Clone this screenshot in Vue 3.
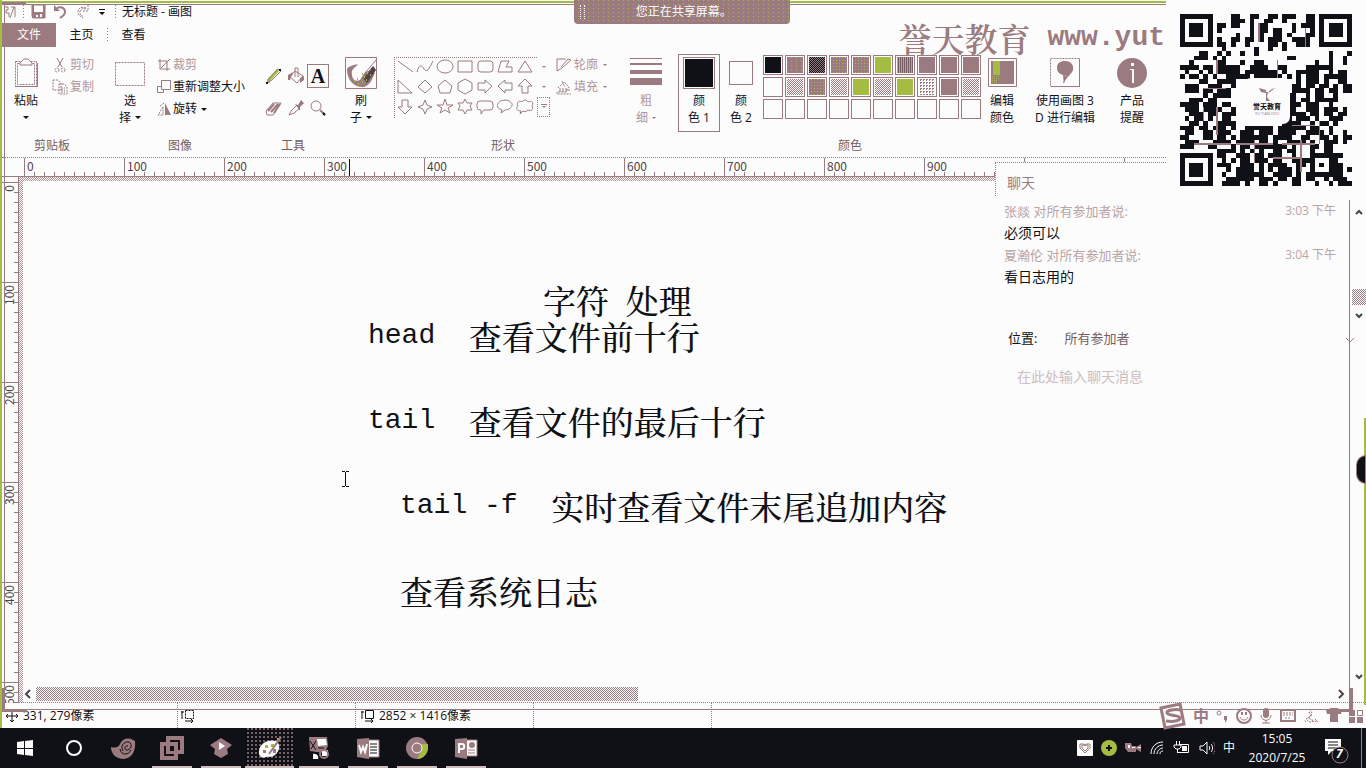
<script setup>
import { ref } from 'vue'

const message = ref('')

const horizontalMarks = Array.from({ length: 12 }, (_, i) => i * 100)
const verticalMarks = Array.from({ length: 6 }, (_, i) => i * 100)

const shapes = [
  'M2 3 L17 14',
  'M1 14 C3 6 6 7 8 11 C11 16 14 9 17 3',
  'M9 2 A8 6.5 0 1 0 9.1 2 Z',
  'M2 3 H16 V14 H2 Z',
  'M5 3 H14 Q17 3 17 6 V11 Q17 14 14 14 H5 Q2 14 2 11 V6 Q2 3 5 3 Z',
  'M5 3 H13 L10 9 H16 V14 H2 Z',
  'M9 3 L16 14 H2 Z',
  'M2 2 V15 H16 Z',
  'M9 2 L16 9 L9 15 L2 9 Z',
  'M9 2 L16 8 L14 15 H4 L2 8 Z',
  'M9 1 L16 5 V12 L9 16 L2 12 V5 Z',
  'M2 5 H9 V2 L16 8 L9 15 V12 H2 Z',
  'M16 5 H9 V2 L2 8 L9 15 V12 H16 Z',
  'M6 15 V8 H2 L9 1 L16 8 H12 V15 Z',
  'M6 2 H12 V9 H16 L9 16 L2 9 H6 Z',
  'M9 2 L11 7 L16 9 L11 11 L9 16 L7 11 L2 9 L7 7 Z',
  'M9 1 L11 7 H17 L12 10 L14 15 L9 12 L4 15 L6 10 L1 7 H7 Z',
  'M9 1 L11 5 H16 L14 8 L16 12 H11 L9 16 L7 12 H2 L4 8 L2 5 H7 Z',
  'M4 3 H14 Q17 3 17 6 V9 Q17 12 14 12 H8 L5 16 V12 H4 Q1 12 1 9 V6 Q1 3 4 3 Z',
  'M6 12 C-1 10 0 3 9 2 C19 3 18 11 9 12 L5 15 Z',
  'M5 13 C0 13 0 9 2 8 C0 4 4 2 6 4 C8 1 11 2 12 4 C16 2 18 5 16 8 C18 11 15 14 12 12 C10 14 8 14 7 13 L4 16 Z'
]

const swatches = [
  'black', 'fleck', 'dense', 'speckle', 'speckle', 'green', 'olive', 'mauve', 'mauve', 'mauve',
  'blank', 'mesh', 'speckle', 'mesh', 'green', 'mesh', 'green', 'pale', 'mauve', 'mesh',
  'blank', 'blank', 'blank', 'blank', 'blank', 'blank', 'blank', 'blank', 'blank', 'blank'
]

const qrRows = [
  '...........##..##..##.###..##........',
  '...........###.#..##..#....##.#......',
  '........##.##..#.##.....#.###.#......',
  '........#......#.##.##..#...#........',
  '............#..#.#..##.#...##........',
  '........#..##.##.#.###..####.........',
  '........##.#..#....##.#..###.........',
  '.........#......#..#..#..............',
  '....##..#.#..#..#...............#...#',
  '...###.#.#.............##.......#..#.',
  '..#.....##...#..##...........#..#..#.',
  '####.##.#####..####..##....######....',
  '.#..#.#.#####.#######.#..#####..#.##.',
  '#.##.#.#..#####.######.#.#.###.#####.',
  '....##..####.............#.###.#..##.',
  '.###..###..#............##.##.##.#.##',
  '.###.##.###.............####.##.##.##',
  '.....#.####............##..#.##..#...',
  '..###.##.............####.##.#####...',
  '####.###.##...........####.###..#....',
  '.###.####..#..........###..###.###.#.',
  '..###.##.###...........####.##.##.##.',
  '.#.##.#..##............#.###.#..###..',
  '..##.#..####..........####..#.##.#...',
  '###.##.###.#..######.######.##..#....',
  '.##..##.###..###.###.####..####.#..#.',
  '##...##.##.#.######.####..##..##.#.##',
  '.###...####.####.##.#..####.#..###.#.',
  '###...##...#.##.#######.#...##.##....',
  '........####.#.#.#..##.##...#..##....',
  '........##..###.##.###..#.....#.###..',
  '.........#.#.##.###.##..####.#..##...',
  '........###..###.#.####..##.####.##..',
  '..........#.####.#.#.###.#..###..##.#',
  '.........#..######..####.#.###.#.##..',
  '..........######.###.##.##.##..#.###.',
  '.........####.#..##.#...##...#..#.###'
]
const qrPath = qrRows
  .map((row, y) => [...row].map((cell, x) => (cell === '#' ? `M${x} ${y}h1v1h-1z` : '')).join(''))
  .join('')

const notes = [
  { key: 'title', latin: '', text: '字符', gap: ' ', rest: '处理' },
  { key: 'head', latin: 'head  ', text: '查看文件前十行' },
  { key: 'tail', latin: 'tail  ', text: '查看文件的最后十行' },
  { key: 'follow', latin: 'tail -f  ', text: '实时查看文件末尾追加内容' },
  { key: 'logs', latin: '', text: '查看系统日志' }
]

const chats = [
  { who: '张燚 对所有参加者说:', time: '3:03 下午', text: '必须可以' },
  { who: '夏瀚伦 对所有参加者说:', time: '3:04 下午', text: '看日志用的' }
]
</script>

<template>
  <div class="desktop">
    <main class="paint">
      <header class="titlebar">
        <svg class="logo" width="12" height="16" viewBox="0 0 12 16"><path d="M1 3h3v3H2v3h3v4M6 14l4-11M7 3h4v10" class="line" /></svg>
        <i class="vdots"></i>
        <button class="quick" aria-label="保存"><svg width="15" height="15" viewBox="0 0 15 15"><path d="M1 1h13v13H2L1 12z" class="line" /><path d="M1 8h13v6H1zM1 1h2v9H1zM12 1h2v9h-2z" class="fill" /><path d="M5 11h2v2H5zM9 10h2v3H9z" fill="#fcfcfc" /></svg></button>
        <button class="quick" aria-label="撤消"><svg width="15" height="15" viewBox="0 0 15 15"><path d="M1 1v6h6z" class="fill" /><path d="M4 4C8 2 12 4 12 8c0 3-2 4-5 6" class="line thick" /></svg></button>
        <button class="quick" aria-label="重做"><svg width="15" height="15" viewBox="0 0 15 15"><path d="M13 1v6H8M11 4C7 2 3 4 3 8c0 3 2 4 5 6" class="line dash" /><path d="M11 5C7 4 5 5 5 8c0 3 1 3 4 5" class="line dash" /></svg></button>
        <button class="quick more" aria-label="自定义快速访问工具栏"><svg width="8" height="8" viewBox="0 0 8 8"><path d="M1 1h6v1H1zM1 4h6L4 7z" fill="#101116" /></svg></button>
        <i class="vdots"></i>
        <h1>无标题 - 画图</h1>
      </header>

      <nav class="tabs">
        <button class="file">文件</button>
        <button class="tab">主页</button>
        <i class="vdots"></i>
        <button class="tab">查看</button>
      </nav>

      <section class="ribbon">
        <div class="group clipboard">
          <div class="body">
            <button class="big">
              <svg width="26" height="32" viewBox="0 0 26 32"><path d="M2.500 4.500h21v25h-21z" class="line dash" /><path d="M4.500 6.500h17v21h-17z" class="line dash" /><path d="M2 29.500h22M24.500 6v24" class="line" /><path d="M7 6l4-4h4l4 4v2H7z" fill="#fcfcfc" stroke="#9b7b7f" /></svg>
              <span>粘贴</span><b class="arrow"></b>
            </button>
            <div class="stack">
              <button class="small dim"><svg width="16" height="16" viewBox="0 0 16 16"><path d="M5 1l5 9M11 1L6 10" class="line" /><circle cx="5" cy="13" r="2" class="line dash" /><circle cx="11" cy="13" r="2" class="line dash" /></svg>剪切</button>
              <button class="small dim"><svg width="16" height="16" viewBox="0 0 16 16"><path d="M1 1h5l3 3v7H1zM7 5h5l3 3v7H7zM9 9h4M9 11h4M9 13h4" class="line dash" /></svg>复制</button>
            </div>
          </div>
          <span class="caption">剪贴板</span>
        </div>

        <div class="group image">
          <div class="body">
            <button class="big">
              <svg width="32" height="32" viewBox="0 0 32 32"><path d="M1.500 5.500h29v23h-29z" fill="none" stroke="#9b7b7f" stroke-dasharray="2 1" /></svg>
              <span>选</span><span>择<b class="arrow"></b></span>
            </button>
            <div class="stack">
              <button class="small dim"><svg width="14" height="14" viewBox="0 0 14 14"><path d="M3 1v10h10M1 3h9v10M4 10l9-9" class="line" /></svg>裁剪</button>
              <button class="small"><svg width="14" height="14" viewBox="0 0 14 14"><path d="M4.500.5h9v9h-9zM4 6.500H.5v6h6V10" class="line" /></svg>重新调整大小</button>
              <button class="small"><svg width="14" height="14" viewBox="0 0 14 14"><path d="M8 1l6 12H8z" class="fill" /><path d="M6 5L1 13h5zM3 4l4-3" class="line dash" /></svg>旋转<b class="arrow"></b></button>
            </div>
          </div>
          <span class="caption">图像</span>
        </div>

        <div class="group tools">
          <div class="body toolgrid">
            <button aria-label="铅笔"><svg width="18" height="18" viewBox="0 0 18 18"><path d="M3 14L13 3" stroke="#a4bc42" stroke-width="3" /><path d="M2 16l2-5L13 2l3 2-9 9zM2 16l3-1" class="line" /><path d="M1 15h2v2H1zM14 2h2v2h-2z" fill="#101116" /></svg></button>
            <button aria-label="用颜色填充"><svg width="18" height="18" viewBox="0 0 18 18"><path d="M8 4l8 5-6 7-7-6zM8 10V1h3v9" class="line" /><path d="M1 8l5-3-3 8H1zM13 11l4-2v4l-4 3z" class="fill" /></svg></button>
            <button aria-label="文本" class="picked">A</button>
            <button aria-label="橡皮擦"><svg width="18" height="18" viewBox="0 0 18 18"><path d="M1 12L8 4h8l-8 12H2z" class="line" /><path d="M3 12l6-7M6 13l7-8M9 14l6-9" class="line thick" /></svg></button>
            <button aria-label="颜色选取器"><svg width="18" height="18" viewBox="0 0 18 18"><path d="M2 16l2-4 6-6 3 3-6 5z" class="line" /><path d="M8 5l3 1 3-5 3 3-4 4v4z" class="fill" /></svg></button>
            <button aria-label="放大镜"><svg width="18" height="18" viewBox="0 0 18 18"><circle cx="7" cy="7" r="5" class="line" /><path d="M11 11l5 5" class="line thick" /><path d="M14 14l2 2" stroke="#101116" stroke-width="2" /></svg></button>
          </div>
          <span class="caption">工具</span>
        </div>

        <div class="group brush">
          <div class="body">
            <button class="big">
              <svg width="32" height="32" viewBox="0 0 32 32"><path d="M.5.5h31v31H.5z" class="line" /><path d="M2 12c0 12 8 19 17 18 8-3 8-9 11-14l-6-2c-5 0-6 5-9 9-6 3-9-3-8-9 1-3 4-4 6-7-6 1-10 3-11 5z" class="fill" /><path d="M18 21l10-12 3 4-9 13z" fill="#4e4148" /><path d="M20 16L31 3M15 26l11-14" class="line" /><path d="M9 24h1M13 27h1M17 25h1M21 23h1M17 17h1M22 16h1M25 18h1M12 22h1M19 20h1" stroke="#a4bc42" stroke-width="2" /></svg>
              <span>刷</span><span>子<b class="arrow"></b></span>
            </button>
          </div>
        </div>

        <div class="group shapes">
          <div class="body">
            <div class="gallery">
              <button v-for="(shape, i) in shapes" :key="i" :aria-label="`形状 ${i + 1}`"><svg width="18" height="17" viewBox="0 0 18 17"><path :d="shape" class="line" /></svg></button>
            </div>
            <div class="scroller">
              <button aria-label="向上"><b class="tiny"></b></button>
              <button aria-label="向下"><b class="tiny"></b></button>
              <button aria-label="更多"><b class="tiny bar"></b></button>
            </div>
            <div class="stack">
              <button class="small dim"><svg width="16" height="16" viewBox="0 0 16 16"><path d="M10 2H1v12l5-3 9-8-3-1-7 8" class="line" /></svg>轮廓<b class="tiny"></b></button>
              <button class="small dim"><svg width="16" height="16" viewBox="0 0 16 16"><path d="M2 9l6-6 5 5-3 5H1v2h14M6 2l3 6M3 12h9M3 10h9M12 11h3" class="line dash" /></svg>填充<b class="tiny"></b></button>
            </div>
          </div>
          <span class="caption">形状</span>
        </div>

        <div class="group size">
          <div class="body">
            <button class="big dim">
              <svg width="32" height="32" viewBox="0 0 32 32"><path d="M0 1h32v1H0zM0 6h32v2H0zM0 13h32v4H0zM0 21h32v7H0z" class="fill" /></svg>
              <span>粗</span><span>细<b class="tiny"></b></span>
            </button>
          </div>
        </div>

        <div class="group colors">
          <div class="body">
            <button class="big current"><i class="ink"></i><span>颜</span><span>色 1</span></button>
            <button class="big second"><i class="paper"></i><span>颜</span><span>色 2</span></button>
            <div class="palette">
              <button v-for="(swatch, i) in swatches" :key="i" :aria-label="`颜色 ${i + 1}`"><i :class="swatch"></i></button>
            </div>
            <button class="big edit">
              <svg width="30" height="32" viewBox="0 0 30 32"><path d="M1.500 1.500h28v28h-28z" class="line" /><path d="M4 4h23v23H4z" class="fill" /><path d="M6 4h7v14H6z" fill="#a4bc42" /><path d="M5 19.500h8M5 21.500h8M5 23.500h6M5 25.500h5" stroke="#a4bc42" stroke-dasharray="1 1" /></svg>
              <span>编辑</span><span>颜色</span>
            </button>
          </div>
          <span class="caption">颜色</span>
        </div>

        <div class="group three">
          <div class="body">
            <button class="big">
              <svg width="30" height="32" viewBox="0 0 30 32"><path d="M.5 1.500h29v28H.5z" class="line dash" /><path d="M29.500 2v28M1 29.500h29" class="line" /><path d="M7 11c0-5 3-7 8-7 6 0 9 4 8 9-1 4-8 8-9 14l-1-9c-3-1-6-3-6-7z" class="fill" /><path d="M13 21h1M15 19h1M13 25h1" stroke="#a4bc42" stroke-width="2" /></svg>
              <span>使用画图 3</span><span>D 进行编辑</span>
            </button>
          </div>
        </div>

        <div class="group tips">
          <div class="body">
            <button class="big">
              <svg width="30" height="32" viewBox="0 0 30 32"><circle cx="15" cy="16" r="15" class="fill" /><path d="M14 6h3v3h-3zM13 12h4v14h-2V13h-2z" fill="#fcfcfc" /></svg>
              <span>产品</span><span>提醒</span>
            </button>
          </div>
        </div>
      </section>

      <section class="workspace">
        <div class="ruler-x">
          <span v-for="mark in horizontalMarks" :key="mark">{{ mark }}</span>
          <i class="cursor-x"></i>
        </div>
        <div class="middle">
          <div class="ruler-y"><span v-for="mark in verticalMarks" :key="mark">{{ mark }}</span></div>
          <div class="sheet">
            <p v-for="note in notes" :key="note.key" :class="note.key"><span v-if="note.latin" class="latin">{{ note.latin }}</span>{{ note.text }}<span v-if="note.gap" class="latin">{{ note.gap }}</span>{{ note.rest }}</p>
            <svg class="caret" width="9" height="18" viewBox="0 0 9 18"><path d="M1 1.500h3M5 1.500h3M4.500 2v14M1 16.500h3M5 16.500h3" stroke="#101116" /></svg>
            <div class="hscroll">
              <button aria-label="向左滚动"><svg width="8" height="10" viewBox="0 0 8 10"><path d="M6 1L2 5l4 4" class="chev" /></svg></button>
              <div class="track"><i></i></div>
              <button aria-label="向右滚动"><svg width="8" height="10" viewBox="0 0 8 10"><path d="M2 1l4 4-4 4" class="chev" /></svg></button>
            </div>
          </div>
        </div>
      </section>

      <footer class="status">
        <span class="cell"><svg width="16" height="14" viewBox="0 0 16 14"><path d="M8 1v12M2 7h12M6 3l2-2 2 2M6 11l2 2 2-2M4 5L2 7l2 2M12 5l2 2-2 2" class="ink-line" /></svg>331, 279像素</span>
        <span class="cell"><svg width="16" height="14" viewBox="0 0 16 14"><path d="M2 2v8M1 3h3M5 12h8M11 10l2 2-2 2" class="ink-line" /><path d="M5.500 1.500h8v8h-8z" class="ink-line" stroke-dasharray="2 1" /></svg></span>
        <span class="cell wide"><svg width="16" height="14" viewBox="0 0 16 14"><path d="M2 2v8M1 3h3M5 12h8M11 10l2 2-2 2M5.500 1.500h8v8h-8z" class="ink-line" /></svg>2852 × 1416像素</span>
        <span class="cell"></span>
      </footer>
    </main>

    <div class="frame"><i class="tl"></i><i class="bl"></i><i class="br"></i></div>
    <div class="share"><i></i><span>您正在共享屏幕。</span></div>
    <div class="watermark">誉天教育<span class="latin"> www.yut</span></div>

    <aside class="chat">
      <h2>聊天</h2>
      <div v-for="chat in chats" :key="chat.time" class="msg">
        <div class="meta"><span>{{ chat.who }}</span><time>{{ chat.time }}</time></div>
        <p>{{ chat.text }}</p>
      </div>
      <div class="to"><span>位置:</span><button>所有参加者</button></div>
      <input v-model="message" type="text" aria-label="聊天消息" placeholder="在此处输入聊天消息" />
    </aside>

    <div class="vscroll">
      <svg width="8" height="6" viewBox="0 0 8 6"><path d="M1 5l3-3 3 3" class="chev" /></svg>
      <i></i>
      <svg width="8" height="6" viewBox="0 0 8 6"><path d="M1 1l3 3 3-3" class="chev" /></svg>
      <svg class="last" width="8" height="6" viewBox="0 0 8 6"><path d="M1 1l3 3 3-3" class="chev" /></svg>
    </div>
    <svg class="drop" width="10" height="6" viewBox="0 0 10 6"><path d="M1 1l4 4 4-4" class="line" /></svg>
    <i class="edge"></i><i class="knob"></i>

    <div class="qr">
      <svg viewBox="0 0 37 37" shape-rendering="crispEdges">
        <path :d="qrPath" fill="#101116" />
        <path d="M0 0h7v7H0zM30 0h7v7h-7zM0 30h7v7H0z" fill="#101116" />
        <path d="M1 1h5v5H1zM31 1h5v5h-5zM1 31h5v5H1z" fill="#fcfcfc" />
        <path d="M2 2h3v3H2zM32 2h3v3h-3zM2 32h3v3H2z" fill="#101116" />
        <path d="M28 30h5v5h-5z" fill="#101116" />
        <path d="M29 31h3v3h-3z" fill="#fcfcfc" />
        <path d="M30 32h1v1h-1z" fill="#101116" />
        <path d="M5 16h5M12 28h8M22 28h7M8 20v6M16 27v5M24 24h5M21 10v4M8 10v3M26 27v7M5 20v3M3 28h8M27 3v4M17 2v4M30 23v5M20 31h6" stroke="#9b7b7f" stroke-width=".3" />
      </svg>
      <div class="badge">
        <svg width="18" height="16" viewBox="0 0 18 16"><path d="M1 2l7 2v3L3 6zM17 2l-5 4-3 1 5-4zM8 6h2l-1 5 3 4H8z" class="fill" /></svg>
        <b>誉天教育</b><small>YU TIAN EDU</small>
      </div>
    </div>

    <div class="ime">
      <svg width="30" height="28" viewBox="0 0 30 28"><path d="M3 6l19-4 4 20-19 4z" fill="#fcfcfc" stroke="#9b7b7f" stroke-width="3" /><path d="M23 8c-6-1-15 0-14 3s13 2 13 5-7 4-14 3" fill="none" stroke="#9b7b7f" stroke-width="3" /></svg>
      <span>中</span>
      <svg width="16" height="18" viewBox="0 0 16 18"><circle cx="5" cy="6" r="2" class="line" /><path d="M10 9h3v4l-2 3v-3h-1z" class="fill" /></svg>
      <svg width="18" height="18" viewBox="0 0 18 18"><circle cx="9" cy="9" r="7" class="line thick" /><path d="M7 5v3M11 5v3" class="line thick" /><path d="M5 10c1 4 7 4 8 0" class="line" /></svg>
      <svg width="16" height="18" viewBox="0 0 16 18"><rect x="5" y="1" width="6" height="10" rx="3" class="fill" /><path d="M3 8c0 7 10 7 10 0M8 13v3M4 16h8" class="line" /></svg>
      <svg width="18" height="18" viewBox="0 0 18 18"><path d="M2 3h14v11H2z" class="line thick" /><path d="M4 6h10M4 8h10M6 11h6" class="line dash" /></svg>
      <svg width="18" height="18" viewBox="0 0 18 18"><path d="M7 2l3 4-1 3-5 3 3 3 8-1M4 15l-2-2M13 12l3 3M7 5l2 4-3 2 6 3" class="line dash" /></svg>
      <svg width="18" height="18" viewBox="0 0 18 18"><path d="M1 3l5-2h6l5 2-1 4h-3v8H5V7H2z" class="fill" /></svg>
      <svg width="16" height="18" viewBox="0 0 16 18"><path d="M1 3h6v6H1zM1 10h6v6H1zM9 10h6v6H9z" class="fill" /><path d="M9.500 3.500h5v5h-5z" class="line" /></svg>
    </div>

    <footer class="taskbar">
      <button class="app" aria-label="开始"><svg width="18" height="18" viewBox="0 0 18 18"><path d="M1 3l7-1v7H1zM9 2l8-1v8H9zM1 10h7v6l-7-1zM9 10h8v7l-8-1z" fill="#fcfcfc" /></svg></button>
      <button class="app" aria-label="Cortana"><svg width="18" height="18" viewBox="0 0 18 18"><circle cx="9" cy="9" r="7" fill="none" stroke="#fcfcfc" stroke-width="2" /></svg></button>
      <button class="app" aria-label="录屏"><svg width="26" height="22" viewBox="0 0 26 22"><path d="M1 10c4 1 7 1 9-3C12 2 18 0 23 3l2 1c1 10-3 17-11 18C6 22 1 17 1 10z" class="fill" /><path d="M13 14c-3-5 1-10 6-9 4 2 2 9-3 8-2-1-1-5 2-4M10 12c1 7 9 6 11 1" fill="none" stroke="#101116" /></svg></button>
      <button class="app open" aria-label="虚拟机"><svg width="26" height="26" viewBox="0 0 26 26"><path d="M9 3h14v14H9zM3 9h14v14H3z" fill="none" stroke="#9b7b7f" stroke-width="4" /><path d="M11 12h4v4h-4z" fill="#101116" /></svg></button>
      <button class="app open" aria-label="播放器"><svg width="24" height="22" viewBox="0 0 24 22"><path d="M12 1l11 7-5 4 1 5-7 4-7-4 1-5-5-4z" class="fill" /><path d="M10 5l6 4-6 4z" fill="#fcfcfc" /></svg></button>
      <button class="app open active" aria-label="画图"><svg width="26" height="24" viewBox="0 0 26 24"><path d="M2 15C3 7 11 3 19 5c5 3 4 10-1 14-4 3-6 1-9 2-4 2-8-1-7-6z" fill="#fcfcfc" /><path d="M6 14h3v3H6zM16 17h3v-4h-3z" class="fill" /><path d="M8 9h3v3H8zM14 8h3v3h-3zM14 13h2M20 2h3v3h-3z" fill="#a4bc42" /><path d="M24 1L12 18" class="line thick" /></svg></button>
      <button class="app open" aria-label="远程工具"><svg width="24" height="24" viewBox="0 0 24 24"><path d="M2 1h18l1 9-4 7-14-2z" class="fill" /><path d="M10 3h9l1 6-9 1zM6 18c5-1 6 4 5 5H6zM15 14h6v6h-6z" fill="#fcfcfc" /><path d="M3 5l6 9M4 13l5-8M11 12h6" stroke="#101116" /><circle cx="17" cy="18" r="4" class="line thick" /></svg></button>
      <button class="app open" aria-label="Word"><svg width="24" height="22" viewBox="0 0 24 22"><path d="M12 3h11v17H12z" fill="#fcfcfc" stroke="#9b7b7f" /><path d="M14 7h7M14 10h7M14 13h7M14 16h7" stroke="#101116" /><path d="M1 2l12-1v21L1 20z" class="fill" /><path d="M3 8l2 7 2-5 2 5 2-8" fill="none" stroke="#fcfcfc" stroke-width="2" /></svg></button>
      <button class="app open" aria-label="Chrome"><svg width="24" height="24" viewBox="0 0 24 24"><circle cx="12" cy="12" r="11" class="fill" /><path d="M16 8h7c1 9-5 15-11 15l5-10z" fill="#a4bc42" /><circle cx="12" cy="12" r="5" fill="#9b7b7f" stroke="#fcfcfc" /></svg></button>
      <button class="app open" aria-label="PowerPoint"><svg width="24" height="22" viewBox="0 0 24 22"><path d="M12 3h11v16H12z" fill="#fcfcfc" stroke="#9b7b7f" /><circle cx="18" cy="8" r="3" class="fill" /><path d="M14 13h7M14 16h7" class="line" /><path d="M1 2l12-1v21L1 20z" class="fill" /><path d="M5 16V7h3c3 0 3 5 0 5H5" fill="none" stroke="#fcfcfc" stroke-width="2" /></svg></button>

      <div class="tray">
        <svg width="16" height="16" viewBox="0 0 16 16"><rect width="16" height="16" rx="1" fill="#fcfcfc" /><path d="M3 4h4l1 2 1-2h4v4l-5 5-5-5z" class="line" /><path d="M5 5h6v3l-3 3-3-3z" class="line" /></svg>
        <svg width="16" height="16" viewBox="0 0 16 16"><circle cx="8" cy="8" r="8" fill="#a4bc42" /><path d="M8 5v6M5 8h6" stroke="#101116" stroke-width="2" /></svg>
        <svg width="16" height="16" viewBox="0 0 16 16"><path d="M0 3h6l1 3h4v6H3L0 8zM11 7l5-3v8l-5-3z" class="fill" /><path d="M3 5h2v3H3zM7 7h3v1H7zM13 7h3v1h-3z" fill="#fcfcfc" /></svg>
        <svg width="16" height="16" viewBox="0 0 16 16"><path d="M2 14C2 7 7 2 14 2M5 14c0-5 4-9 9-9M8 14c0-3 3-6 6-6M11 14c0-2 1-3 3-3" class="white" /></svg>
        <svg width="18" height="16" viewBox="0 0 18 16"><path d="M5 12.500h10.500v-8H7M3.500 1v4M6.500 1v4M1 5h7v2L6 9H3L1 7zM4.500 9v4" class="white" /><path d="M9 6h5v5H9z" fill="#fcfcfc" /></svg>
        <svg width="16" height="16" viewBox="0 0 16 16"><path d="M1 6h3l4-4v12l-4-4H1zM10 6c1 1 1 3 0 4M12 4c2 2 2 6 0 8" class="white" /><path d="M14 2c3 3 3 9 0 12" class="line dash" /></svg>
        <span>中</span>
      </div>
      <div class="clock"><span>15:05</span><span>2020/7/25</span></div>
      <button class="notice" aria-label="通知"><svg width="26" height="28" viewBox="0 0 26 28"><path d="M1 2h16v12H8l-4 4v-4H1z" fill="#fcfcfc" /><path d="M4 5h10M4 8h10M4 11h8" stroke="#101116" /><circle cx="16" cy="18" r="8" fill="#101116" stroke="#9b7b7f" /></svg><em>7</em></button>
    </footer>
  </div>
</template>

<style>
body { margin: 0; background: #fcfcfc; }
</style>

<style scoped>
* { box-sizing: border-box; }
.desktop { position: relative; display: flex; flex-direction: column; min-height: 100vh; overflow: hidden; background: #fcfcfc; color: #101116; font: 12px/16px "Open Sans", "Noto Sans CJK SC", sans-serif; }
button { margin: 0; padding: 0; border: 0; background: none; color: inherit; font: inherit; line-height: inherit; }
h1, h2, p { margin: 0; font-size: inherit; font-weight: 400; }
svg { display: block; flex: none; }
.line { fill: none; stroke: #9b7b7f; }
.thick { stroke-width: 2; }
.dash { stroke-dasharray: 2 1; }
.fill { fill: #9b7b7f; }
.ink-line { fill: none; stroke: #101116; }
.white { fill: none; stroke: #fcfcfc; }
.chev { fill: none; stroke: #4e4148; stroke-width: 2; }
.dim { color: #b09699; }
.latin { font-family: "Liberation Mono", monospace; font-size: 28px; white-space: pre; }

.paint { flex: 1; display: flex; flex-direction: column; border-left: 2px solid #a4bc42; }
.titlebar { display: flex; align-items: center; height: 23px; padding-left: 2px; gap: 7px; }
.titlebar h1 { margin-left: -1px; }
.vdots { width: 1px; height: 14px; background: repeating-linear-gradient(#9b7b7f 0 1px, transparent 1px 3px); }
.quick.more { margin: 0 2px 0 1px; }
.tabs { display: flex; align-items: center; height: 24px; }
.file { width: 54px; height: 24px; background: #9b7b7f; color: #fcfcfc; }
.tab { width: 51px; height: 24px; }

.ribbon { display: flex; height: 111px; padding: 7px 0 3px; border-bottom: 1px dotted #9b7b7f; overflow: hidden; }
.group { flex: none; display: flex; flex-direction: column; justify-content: space-between; }
.body { display: flex; align-items: flex-start; }
.caption { color: #765e63; text-align: center; }
.big { display: flex; flex-direction: column; align-items: center; line-height: 17px; padding-top: 3px; white-space: nowrap; }
.big > svg { margin-bottom: 3px; }
.big span { display: flex; align-items: center; gap: 4px; }
.stack { display: flex; flex-direction: column; }
.small { display: flex; align-items: center; gap: 2px; height: 22px; white-space: nowrap; }
.arrow { border: 3px solid transparent; border-top-color: #101116; border-bottom: 0; }
.big > .arrow { margin-top: 7px; }
.small .arrow { margin-left: 2px; }
.tiny { border: 2px solid transparent; border-top-color: #9b7b7f; border-bottom: 0; }
.small .tiny { margin-left: 3px; }
.clipboard { width: 96px; margin-left: 2px; }
.clipboard .big { width: 44px; }
.clipboard .stack { margin-left: 4px; }
.image { width: 140px; margin-left: 10px; }
.image .big { width: 40px; }
.image .stack { margin-left: 7px; }
.tools { width: 60px; margin-left: 13px; }
.toolgrid { display: grid; grid-template-columns: 22px 22px 22px; padding-top: 10px; row-gap: 8px; }
.toolgrid button { display: flex; align-items: center; justify-content: center; height: 24px; }
.toolgrid .picked { border: 1px solid #9b7b7f; font: 700 20px/20px "Liberation Serif", serif; }
.brush { width: 34px; margin-left: 21px; }
.shapes { width: 218px; margin-left: 16px; }
.gallery { display: grid; grid-template-columns: repeat(7, 20px); width: 143px; margin-top: 3px; padding-left: 1px; border: 1px dotted #9b7b7f; border-width: 1px 0 0 1px; }
.gallery button { display: flex; align-items: flex-start; height: 20px; }
.scroller { display: flex; flex-direction: column; width: 13px; margin-top: 3px; }
.scroller button { display: flex; align-items: center; justify-content: center; height: 20px; }
.scroller button:last-child { border: 1px dotted #9b7b7f; }
.bar { position: relative; }
.bar::before { content: ""; position: absolute; left: -3px; top: -4px; width: 6px; height: 1px; background: #9b7b7f; }
.shapes .stack { margin-left: 6px; }
.size { width: 36px; margin-left: 16px; }
.colors { width: 344px; margin-left: 14px; }
.current { width: 42px; height: 78px; border: 1px solid #9b7b7f; padding-top: 2px; }
.ink { width: 32px; height: 32px; margin-bottom: 3px; border: 1px solid #9b7b7f; padding: 1px; background: #101116 content-box; }
.second { width: 42px; }
.paper { width: 24px; height: 24px; margin: 4px 0 7px; border: 1px solid #9b7b7f; }
.palette { display: grid; grid-template-columns: repeat(10, 20px); gap: 2px; margin: 1px 5px 0 1px; }
.palette button { height: 20px; padding: 1px; border: 1px solid #9b7b7f; }
.palette i { display: block; height: 16px; }
.black { background: #101116; }
.mauve { background: #9b7b7f; }
.green { background: #a4bc42; }
.dense { background: repeating-conic-gradient(#101116 0 25%, #9b7b7f 0 50%) 0 0 / 2px 2px; }
.mesh { background: repeating-conic-gradient(#9b7b7f 0 25%, #fcfcfc 0 50%) 0 0 / 2px 2px; }
.pale { background: conic-gradient(#9b7b7f 25%, #fcfcfc 0) 0 0 / 3px 3px; }
.speckle { background: linear-gradient(45deg, #9b7b7f 70%, #a4bc42 0) 0 0 / 3px 3px; }
.fleck { background: linear-gradient(45deg, #9b7b7f 80%, #a4bc42 0) 0 0 / 5px 4px; }
.olive { background: repeating-linear-gradient(90deg, #a4bc42 0 1px, #765e63 1px 2px); }
.edit { width: 32px; }
.three { width: 68px; margin-left: 9px; }
.tips { width: 36px; margin-left: 15px; }
.three .big, .tips .big, .brush .big, .size .big { width: 100%; }

.workspace { flex: 1; display: flex; flex-direction: column; }
.ruler-x { position: relative; display: flex; height: 19px; padding-left: 22px; overflow: hidden; border-bottom: 1px solid #9b7b7f; }
.ruler-x span { flex: none; width: 100px; height: 18px; padding-left: 2px; line-height: 15px; border-left: 1px solid #9b7b7f; font-family: "Noto Sans CJK SC", sans-serif; background: repeating-linear-gradient(90deg, #9b7b7f 0 1px, transparent 1px 10px) 9px 100% / 90px 4px no-repeat; color: #4e4148; }
.cursor-x { position: absolute; left: 347px; top: 1px; width: 1px; height: 17px; background: #101116; }
.middle { flex: 1; display: flex; }
.ruler-y { width: 17px; overflow: hidden; border-right: 1px solid #9b7b7f; contain: size; }
.ruler-y span { display: block; width: 16px; height: 100px; padding-top: 2px; border-top: 1px solid #9b7b7f; writing-mode: sideways-lr; text-align: right; font: 12px/13px "Noto Sans CJK SC", sans-serif; background: repeating-linear-gradient(#9b7b7f 0 1px, transparent 1px 10px) 100% 9px / 4px 90px no-repeat; color: #4e4148; }
.ruler-y span:first-child { margin-top: 5px; }
.sheet { position: relative; flex: 1; display: flex; flex-direction: column; min-width: 0; padding-top: 105px; border-bottom: 1px dotted #9b7b7f; background: linear-gradient(#fcfcfc, #fcfcfc) 4px 4px no-repeat, repeating-conic-gradient(#b09699 0 25%, #fcfcfc 0 50%) 0 0 / 2px 2px; }
.sheet p { display: flex; align-items: center; height: 36px; font: 500 33px/36px "Noto Serif CJK SC", "Noto Sans CJK SC", sans-serif; white-space: pre; }
.title { padding-left: 524px; }
.head { padding-left: 349px; }
.tail { padding-left: 349px; margin-top: 49px; }
.follow { padding-left: 381px; margin-top: 49px; }
.logs { padding-left: 381px; margin-top: 49px; }
.caret { position: absolute; left: 322px; top: 293px; }
.hscroll { display: flex; align-items: center; height: 16px; margin: auto 20px 0 4px; }
.hscroll button { padding: 0 1px; }
.track { flex: 1; margin: 0 3px; height: 14px; }
.track i { display: block; width: 46.4%; height: 14px; background: repeating-conic-gradient(#9b7b7f 0 25%, #fcfcfc 0 50%) 0 0 / 2px 2px; }
.status { display: flex; height: 25px; }
.cell { display: flex; align-items: center; gap: 3px; width: 178px; border-right: 1px dotted #9b7b7f; }
.cell:first-child { width: 176px; }
.cell svg { margin-left: 2px; }
.cell.wide svg { margin-left: 4px; }

.frame { position: absolute; top: 4px; left: 4px; right: 16px; bottom: 58px; border: 1px solid #9b7b7f; pointer-events: none; }
.frame::before { content: ""; position: absolute; top: -4px; left: -4px; right: 0; height: 2px; background: #a4bc42; }
.frame i { position: absolute; }
.tl { left: -3px; top: -4px; width: 24px; height: 4px; background: #9b7b7f; border-top: 1px solid #a4bc42; }
.bl { left: -3px; bottom: -3px; width: 25px; height: 24px; border-left: 3px solid #9b7b7f; border-bottom: 3px solid #9b7b7f; }
.br { right: -4px; bottom: -3px; width: 25px; height: 24px; border-right: 4px solid #9b7b7f; border-bottom: 3px solid #9b7b7f; }
.share { position: absolute; top: 0; left: 42%; width: 216px; height: 24px; border-radius: 0 0 4px 4px; background: linear-gradient(45deg, #9b7b7f 85%, #a4bc42 0) 0 0 / 5px 4px; color: #fcfcfc; text-align: center; line-height: 23px; padding-left: 4px; }
.share i { position: absolute; left: 6px; top: 5px; width: 5px; height: 14px; border: 1px dotted #fcfcfc; border-width: 0 1px; }
.watermark { position: absolute; top: 20px; right: 201px; display: flex; align-items: center; height: 36px; color: #9b7b7f; font: 600 33px/36px "Noto Serif CJK SC", "Noto Sans CJK SC", sans-serif; white-space: pre; }
.chat { position: absolute; top: 162px; right: 17px; width: 354px; height: 262px; padding: 10px 13px 0 9px; background: #fcfcfc; }
.chat::before { content: ""; position: absolute; left: 0; top: 0; width: 170px; height: 33px; border: 1px dotted #9b7b7f; border-width: 1px 0 0 1px; }
.chat h2 { margin: 0 0 7px 3px; color: #9b7b7f; font-size: 14px; line-height: 22px; }
.meta { display: flex; justify-content: space-between; color: #b9a4a6; font-size: 13px; line-height: 20px; }
.meta time { font-size: 12px; }
.msg p { font-size: 14px; line-height: 24px; }
.to { display: flex; gap: 27px; margin: 39px 0 0 4px; font-size: 13px; line-height: 20px; }
.to button { color: #765e63; }
.chat input { display: block; width: 300px; margin: 16px 0 0 13px; padding: 0; border: 0; outline: 0; background: none; color: inherit; font: 14px/24px "Noto Sans CJK SC", sans-serif; }
.chat input::placeholder { color: #cdbdbf; opacity: 1; }
.vscroll { position: absolute; top: 209px; right: 0; bottom: 88px; width: 14px; display: flex; flex-direction: column; align-items: center; }
.vscroll i { width: 14px; height: 16px; margin: 74px 0 8px; background: repeating-conic-gradient(#9b7b7f 0 25%, #fcfcfc 0 50%) 0 0 / 2px 2px; }
.last { margin-top: auto; }
.drop { position: absolute; right: 11px; top: 337px; }
.edge { position: absolute; right: 0; top: 418px; bottom: 63px; width: 2px; background: #a4bc42; }
.knob { position: absolute; right: 0; top: 455px; width: 10px; height: 29px; border: 1px solid #9b7b7f; border-radius: 10px 0 0 10px; background: #101116; }
.qr { position: absolute; top: 0; right: 0; width: 200px; height: 200px; padding: 14px; background: #fcfcfc; }
.qr > svg { width: 172px; height: 172px; }
.badge { position: absolute; left: 78px; top: 78px; width: 46px; height: 46px; display: flex; flex-direction: column; align-items: center; justify-content: center; border-radius: 7px; background: #fcfcfc; }
.badge b { font: 700 7px/9px "Noto Sans CJK SC", sans-serif; }
.badge small { color: #9b7b7f; font-size: 4px; line-height: 6px; }
.ime { position: absolute; right: 2px; bottom: 40px; height: 24px; display: flex; align-items: center; gap: 5px; color: #9b7b7f; font-size: 16px; font-weight: 700; }

.taskbar { display: flex; height: 40px; background: #101116; color: #fcfcfc; }
.app { position: relative; display: flex; align-items: center; justify-content: center; width: 49px; height: 40px; }
.open::after { content: ""; position: absolute; left: 5px; bottom: 0; width: 40px; height: 2px; background: #cdbdbf; }
.active { background: conic-gradient(#765e63 25%, #101116 0) 0 0 / 4px 4px; }
.active::after { left: 0; width: 49px; }
.tray { display: flex; align-items: center; gap: 8px; margin: 0 1px 0 auto; }
.clock { display: flex; flex-direction: column; align-items: center; justify-content: center; width: 82px; line-height: 19px; }
.notice { position: relative; display: flex; align-items: center; width: 44px; padding: 6px 0 0 6px; border-right: 1px solid #9b7b7f; margin-right: 4px; }
.notice em { position: absolute; left: 18px; top: 18px; font: italic 700 12px/16px "Open Sans", sans-serif; }
</style>
